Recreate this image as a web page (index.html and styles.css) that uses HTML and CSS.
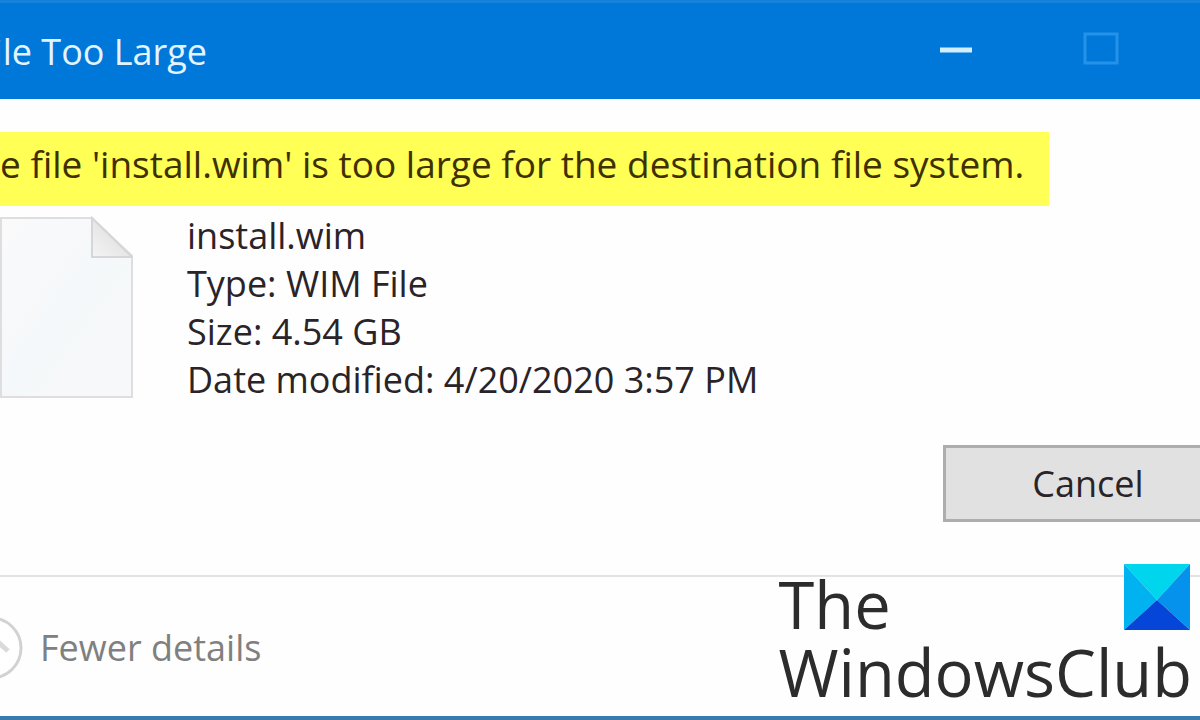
FILE: index.html
```html
<!DOCTYPE html>
<html lang="en">
<head>
<meta charset="utf-8">
<meta name="viewport" content="width=device-width, initial-scale=1">
<title>File Too Large</title>
<link rel="stylesheet" href="styles.css">
</head>
<body>
<main class="dialog">
  <header class="titlebar">
    <h1 class="title">File Too Large</h1>
    <div class="controls">
      <button class="control" type="button" aria-label="Minimize">
        <svg width="36" height="36" viewBox="0 0 36 36"><path d="M2 19H34" stroke="#d3efff" stroke-width="5"/></svg>
      </button>
      <button class="control" type="button" aria-label="Maximize" disabled>
        <svg width="36" height="36" viewBox="0 0 36 36"><rect x="2" y="3" width="32" height="29" fill="none" stroke="#2492ea" stroke-width="3"/></svg>
      </button>
    </div>
  </header>
  <section class="content">
    <p class="message">The file 'install.wim' is too large for the destination file system.</p>
    <div class="file">
      <svg class="file-icon" width="148" height="184" viewBox="0 0 148 184" aria-hidden="true">
        <defs>
          <linearGradient id="paper" x1="0" y1="0" x2="1" y2="1"><stop offset="0" stop-color="#fafafa"/><stop offset=".5" stop-color="#f5f8fa"/><stop offset="1" stop-color="#f8f8f9"/></linearGradient>
          <linearGradient id="fold" x1="0" y1="1" x2="1" y2="0"><stop offset="0" stop-color="#f4f4f4"/><stop offset="1" stop-color="#d8d8d8"/></linearGradient>
        </defs>
        <path d="M16 2H107L147 40V181H16Z" fill="url(#paper)" stroke="#dedddf" stroke-width="2"/>
        <path d="M107 2V41H147Z" fill="url(#fold)" stroke="#d6d6d8" stroke-width="2"/>
      </svg>
      <ul class="details">
        <li>install.wim</li>
        <li>Type: WIM File</li>
        <li>Size: 4.54 GB</li>
        <li>Date modified: 4/20/2020 3:57 PM</li>
      </ul>
    </div>
    <div class="actions"><button class="cancel" type="button">Cancel</button></div>
  </section>
  <footer class="footer">
    <button class="toggle" type="button">
      <svg width="64" height="64" viewBox="0 0 64 64" aria-hidden="true"><circle cx="32" cy="32" r="30" fill="#fff" stroke="#d2d2d2" stroke-width="3"/><path d="M15 35L32 20L49 35" fill="none" stroke="#dadada" stroke-width="5"/></svg>
      <span>Fewer details</span>
    </button>
  </footer>
</main>
<aside class="brand">
  <span>The<br>WindowsClub</span>
  <svg class="brand-mark" width="66" height="66" viewBox="0 0 66 66" aria-hidden="true">
    <path d="M0 0H66L33 36Z" fill="#00d5ee"/><path d="M0 0L33 36L0 66Z" fill="#00b2f0"/><path d="M66 0V66L33 36Z" fill="#0492ed"/><path d="M0 66L33 36L66 66Z" fill="#0545d8"/>
  </svg>
</aside>
</body>
</html>
```
FILE: styles.css
```css
* { box-sizing: border-box; }
body {
  margin: 0;
  overflow: hidden;
  position: relative;
  background: #fefefe;
  color: #2a2328;
  font: 36px/48px "Open Sans", "Noto Sans", sans-serif;
}
button { font: inherit; color: inherit; cursor: pointer; }
h1, p, ul { margin: 0; padding: 0; }
.dialog {
  min-height: 100vh;
  margin: 0 -33px 0 -46px;
  display: flex;
  flex-direction: column;
  border-bottom: 4px solid #3a7bb0;
}
.titlebar {
  display: flex;
  justify-content: space-between;
  height: 99px;
  padding-right: 114px;
  border-top: 3px solid #1583dc;
  background: #0078d9;
  color: #e3f4ff;
}
.title { padding: 25px 0 0 21px; font-size: 36px; font-weight: 400; }
.controls { display: flex; gap: 109px; padding-top: 28px; align-items: flex-start; }
.control { display: flex; padding: 0; border: 0; background: none; }
.content { padding: 33px 0 0; }
.message {
  width: fit-content;
  height: 74px;
  padding: 8px 25px 0 3px;
  background: #ffff55;
  color: #403000;
  font-size: 37px;
  white-space: nowrap;
}
.file { display: flex; gap: 54px; padding: 6px 0 0 31px; }
.file-icon { margin-top: 4px; flex: none; }
.details { list-style: none; white-space: nowrap; }
.actions { display: flex; justify-content: flex-end; margin-top: 41px; }
.cancel {
  width: 290px;
  height: 77px;
  padding: 0;
  border: 3px solid #adadad;
  background: #e1e1e1;
}
.footer {
  flex: 1;
  margin-top: 53px;
  padding: 39px 0 0 5px;
  border-top: 2px solid #e4e4e4;
}
.toggle {
  display: flex;
  align-items: center;
  gap: 17px;
  padding: 0;
  border: 0;
  background: none;
  color: #808080;
}
.brand {
  position: absolute;
  right: 8px;
  bottom: 14px;
  color: #2c2c2c;
  font-size: 65px;
  line-height: 68px;
}
.brand-mark { position: absolute; right: 2px; top: -6px; }
```
